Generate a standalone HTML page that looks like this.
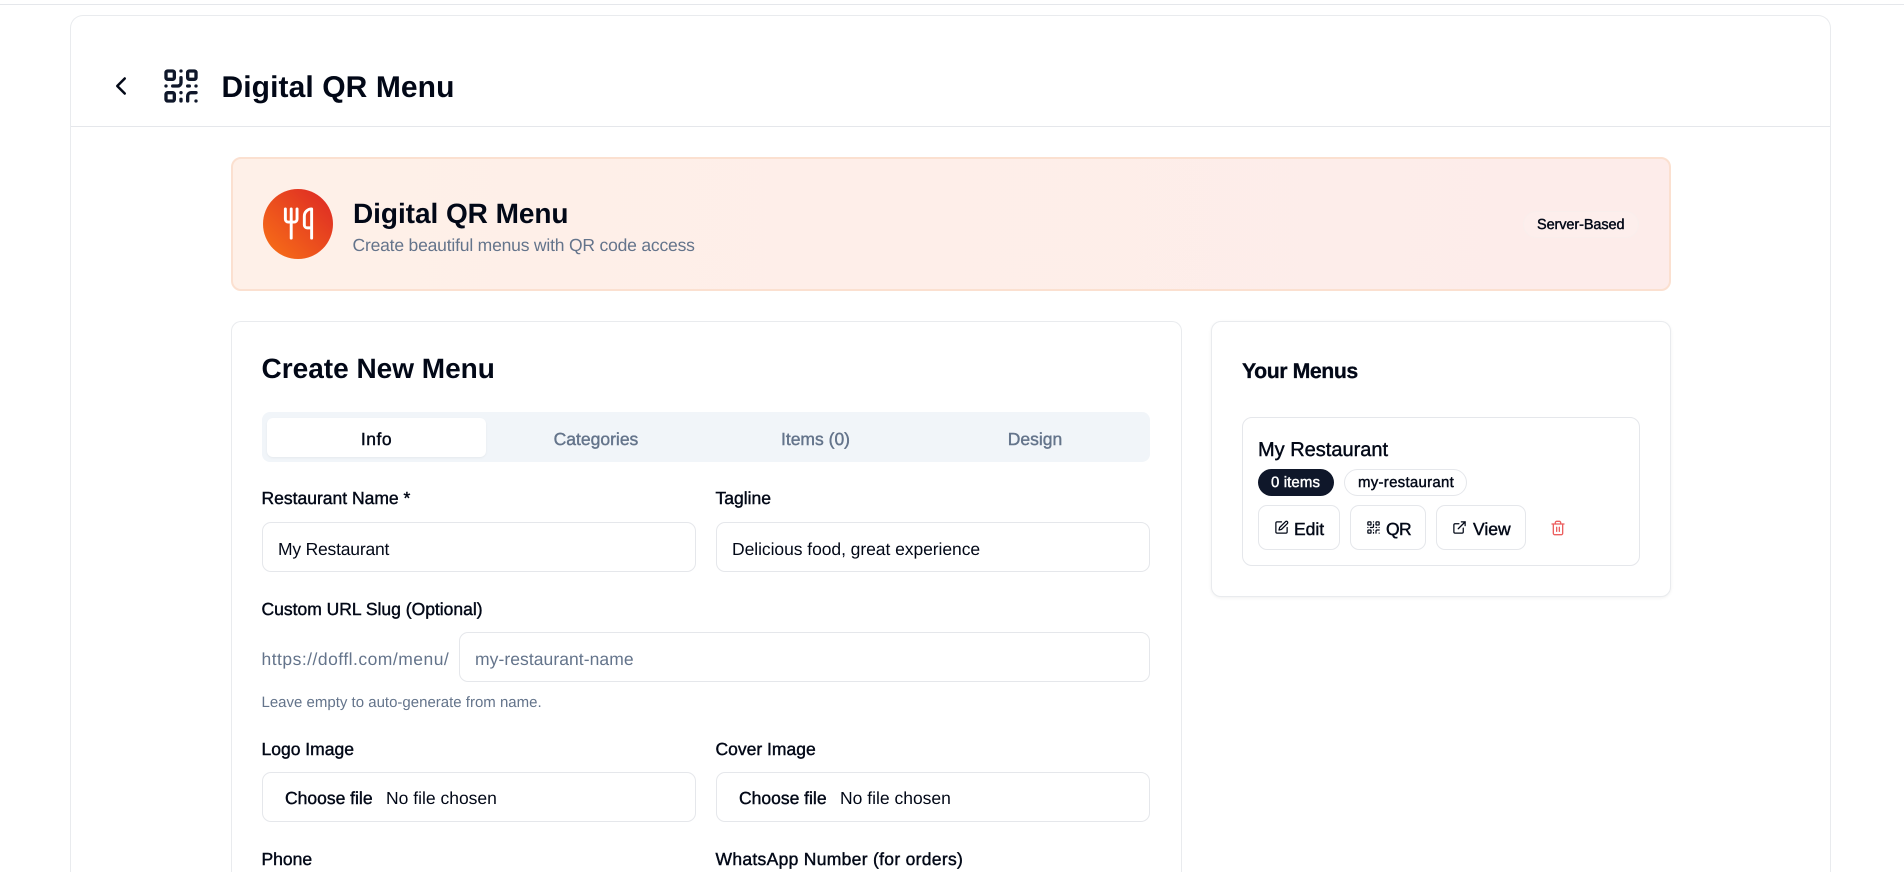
<!DOCTYPE html>
<html lang="en"><head><meta charset="utf-8"><title>Digital QR Menu</title>
<style>
html,body{margin:0;padding:0;background:#fff}
#w{position:relative;width:1904px;height:872px;overflow:hidden;font-family:"Liberation Sans",Arial,sans-serif;color:#020817;text-rendering:geometricPrecision}
.a{position:absolute;box-sizing:border-box}
.t{position:absolute;white-space:nowrap;line-height:24px;height:24px;font-size:17.5px}
.m{-webkit-text-stroke:.42px currentColor}
.g{color:#64748b}
.b{border:1px solid #e5e7eb;border-radius:9px;background:#fff}
svg{position:absolute;fill:none;stroke:currentColor;stroke-linecap:round;stroke-linejoin:round}
</style></head><body>
<div id="w">
<div class="a" style="left:0;top:4px;width:1904px;height:1px;background:#e5e7eb"></div>
<div class="a" style="left:70px;top:15px;width:1761px;height:857px;border:1px solid #e9ebee;border-bottom:0;border-radius:13px 13px 0 0"></div>
<div class="a" style="left:71px;top:126px;width:1759px;height:1px;background:#e5e7eb"></div>

<svg viewBox="0 0 24 24" stroke-width="2" style="left:106px;top:71px;width:30px;height:30px;color:#020817"><path d="m15 18-6-6 6-6"/></svg>
<svg viewBox="0 0 24 24" stroke-width="2" style="left:161px;top:65.5px;width:40px;height:40px;color:#0f172a"><rect width="5" height="5" x="3" y="3" rx="1"/><rect width="5" height="5" x="16" y="3" rx="1"/><rect width="5" height="5" x="3" y="16" rx="1"/><path d="M21 16h-3a2 2 0 0 0-2 2v3"/><path d="M21 21v.01"/><path d="M12 7v3a2 2 0 0 1-2 2H7"/><path d="M3 12h.01"/><path d="M12 3h.01"/><path d="M12 16v.01"/><path d="M16 12h1"/><path d="M21 12v.01"/><path d="M12 21v-1"/></svg>
<h1 class="t" style="margin:0;left:221.5px;top:76px;font-size:30px;font-weight:700;letter-spacing:.09px">Digital QR Menu</h1>

<div class="a" style="left:231px;top:157px;width:1440px;height:134px;border:2px solid #fbe0d0;border-radius:10px;background:linear-gradient(90deg,#fef0e8,#fdecea)"></div>
<div class="a" style="left:263px;top:189px;width:70px;height:70px;border-radius:50%;background:linear-gradient(45deg,#f97316,#dc2626)"></div>
<svg viewBox="0 0 24 24" stroke-width="2" style="left:280.5px;top:206px;width:35px;height:35px;color:#fff"><path d="M3 2v7c0 1.1.9 2 2 2h4a2 2 0 0 0 2-2V2"/><path d="M7 2v20"/><path d="M21 15V2a5 5 0 0 0-5 5v6c0 1.1.9 2 2 2h3Zm0 0v7"/></svg>
<div class="t" style="left:353px;top:202px;font-size:28px;font-weight:700;letter-spacing:-.05px">Digital QR Menu</div>
<div class="t g" style="left:352.5px;top:233px;letter-spacing:-.19px">Create beautiful menus with QR code access</div>
<div class="a" style="left:1523px;top:211px;width:116px;height:27px;border:1px solid #f9eeec;border-radius:14px;background:#fdeeec"></div>
<div class="t m" style="left:1537px;top:213px;font-size:14.5px;letter-spacing:-.1px">Server-Based</div>

<div class="a" style="left:231px;top:321px;width:951px;height:551px;border:1px solid #e9ebee;border-bottom:0;border-radius:10px 10px 0 0;background:#fff"></div>
<h2 class="t" style="margin:0;left:261.5px;top:357px;font-size:28px;font-weight:700">Create New Menu</h2>

<div class="a" style="left:262px;top:412px;width:888px;height:50px;background:#f1f5f9;border-radius:8px"></div>
<div class="a" style="left:267px;top:418px;width:219px;height:39px;background:#fff;border-radius:6px;box-shadow:0 1px 2px rgba(0,0,0,.05)"></div>
<div class="t m" style="left:267px;width:219px;text-align:center;top:427px;letter-spacing:.5px">Info</div>
<div class="t m g" style="left:486px;width:220px;text-align:center;top:427px">Categories</div>
<div class="t m g" style="left:706px;width:219px;text-align:center;top:427px">Items (0)</div>
<div class="t m g" style="left:925px;width:220px;text-align:center;top:427px">Design</div>

<label class="t m" style="left:261.5px;top:486px">Restaurant Name *</label>
<label class="t m" style="left:715.5px;top:486px">Tagline</label>
<div class="a b" style="left:262px;top:522px;width:434px;height:50px"></div>
<div class="a b" style="left:716px;top:522px;width:434px;height:50px"></div>
<div class="t" style="left:278px;top:537px;letter-spacing:-.2px">My Restaurant</div>
<div class="t" style="left:732px;top:537px;letter-spacing:-.06px">Delicious food, great experience</div>

<label class="t m" style="left:261.5px;top:596.5px">Custom URL Slug (Optional)</label>
<div class="t g" style="left:261.5px;top:647px;letter-spacing:.48px">https://doffl.com/menu/</div>
<div class="a b" style="left:459px;top:632px;width:691px;height:50px"></div>
<div class="t g" style="left:475px;top:647px;letter-spacing:.06px">my-restaurant-name</div>
<div class="t g" style="left:261.5px;top:691px;font-size:15px">Leave empty to auto-generate from name.</div>

<label class="t m" style="left:261.5px;top:737px">Logo Image</label>
<label class="t m" style="left:715.5px;top:737px">Cover Image</label>
<div class="a b" style="left:262px;top:772px;width:434px;height:50px"></div>
<div class="a b" style="left:716px;top:772px;width:434px;height:50px"></div>
<div class="t m" style="left:285px;top:786px">Choose file</div>
<div class="t" style="left:386px;top:786px">No file chosen</div>
<div class="t m" style="left:739px;top:786px">Choose file</div>
<div class="t" style="left:840px;top:786px">No file chosen</div>

<label class="t m" style="left:261.5px;top:846.5px">Phone</label>
<label class="t m" style="left:715.5px;top:846.5px;letter-spacing:.3px">WhatsApp Number (for orders)</label>

<div class="a" style="left:1211px;top:321px;width:460px;height:276px;border:1px solid #e9ebee;border-radius:10px;background:#fff;box-shadow:0 1px 3px rgba(0,0,0,.06)"></div>
<h3 class="t" style="margin:0;left:1242px;top:358.5px;font-size:21.3px;letter-spacing:-.45px;-webkit-text-stroke:.3px currentColor">Your Menus</h3>
<div class="a" style="left:1242px;top:417px;width:398px;height:149px;border:1px solid #e5e7eb;border-radius:10px"></div>
<div class="t m" style="left:1258px;top:438px;font-size:20px">My Restaurant</div>
<div class="a" style="left:1258px;top:468.5px;width:76px;height:27px;border-radius:14px;background:#0f172a"></div>
<div class="t m" style="left:1271px;top:470.5px;font-size:15px;color:#fff;letter-spacing:.1px">0 items</div>
<div class="a" style="left:1344px;top:468.5px;width:123px;height:27px;border-radius:14px;border:1px solid #e5e7eb"></div>
<div class="t m" style="left:1358px;top:470.5px;font-size:15px;letter-spacing:.27px">my-restaurant</div>

<div class="a b" style="left:1258px;top:505px;width:82px;height:45px"></div>
<svg viewBox="0 0 24 24" stroke-width="2" style="left:1274px;top:520px;width:15px;height:15px"><path d="M12 3H5a2 2 0 0 0-2 2v14a2 2 0 0 0 2 2h14a2 2 0 0 0 2-2v-7"/><path d="M18.375 2.625a2.121 2.121 0 1 1 3 3L12 15l-4 1 1-4Z"/></svg>
<div class="t m" style="left:1294px;top:516.5px">Edit</div>
<div class="a b" style="left:1350px;top:505px;width:76px;height:45px"></div>
<svg viewBox="0 0 24 24" stroke-width="2" style="left:1366px;top:520px;width:15px;height:15px"><rect width="5" height="5" x="3" y="3" rx="1"/><rect width="5" height="5" x="16" y="3" rx="1"/><rect width="5" height="5" x="3" y="16" rx="1"/><path d="M21 16h-3a2 2 0 0 0-2 2v3"/><path d="M21 21v.01"/><path d="M12 7v3a2 2 0 0 1-2 2H7"/><path d="M3 12h.01"/><path d="M12 3h.01"/><path d="M12 16v.01"/><path d="M16 12h1"/><path d="M21 12v.01"/><path d="M12 21v-1"/></svg>
<div class="t m" style="left:1386px;top:516.5px;letter-spacing:-.6px">QR</div>
<div class="a b" style="left:1436px;top:505px;width:90px;height:45px"></div>
<svg viewBox="0 0 24 24" stroke-width="2" style="left:1452px;top:520px;width:15px;height:15px"><path d="M15 3h6v6"/><path d="M10 14 21 3"/><path d="M18 13v6a2 2 0 0 1-2 2H5a2 2 0 0 1-2-2V8a2 2 0 0 1 2-2h6"/></svg>
<div class="t m" style="left:1473px;top:516.5px">View</div>
<svg viewBox="0 0 24 24" stroke-width="2" style="left:1550px;top:520px;width:16px;height:16px;color:#ec5f5f"><path d="M3 6h18"/><path d="M19 6v14c0 1-1 2-2 2H7c-1 0-2-1-2-2V6"/><path d="M8 6V4c0-1 1-2 2-2h4c1 0 2 1 2 2v2"/><line x1="10" x2="10" y1="11" y2="17"/><line x1="14" x2="14" y1="11" y2="17"/></svg>
</div>
</body></html>
